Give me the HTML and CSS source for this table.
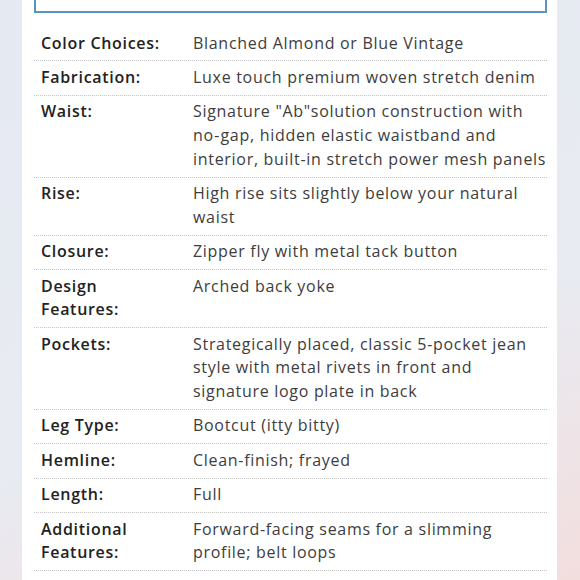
FILE: index.html
```html
<!DOCTYPE html>
<html>
<head>
<meta charset="utf-8">
<link rel="stylesheet" href="styles.css">
</head>
<body>
<div class="page">
  <div class="card">
    <div class="topbox"></div>
    <div class="specs">
      <div class="row"><div class="label">Color Choices:</div><div class="value">Blanched Almond or Blue Vintage</div></div>
      <div class="row"><div class="label">Fabrication:</div><div class="value">Luxe touch premium woven stretch denim</div></div>
      <div class="row"><div class="label">Waist:</div><div class="value">Signature "Ab"solution construction with no&#8209;gap, hidden elastic waistband and interior, built-in stretch power mesh panels</div></div>
      <div class="row"><div class="label">Rise:</div><div class="value">High rise sits slightly below your natural waist</div></div>
      <div class="row"><div class="label">Closure:</div><div class="value">Zipper fly with metal tack button</div></div>
      <div class="row"><div class="label">Design Features:</div><div class="value">Arched back yoke</div></div>
      <div class="row"><div class="label">Pockets:</div><div class="value">Strategically placed, classic 5-pocket jean style with metal rivets in front and signature logo plate in back</div></div>
      <div class="row"><div class="label">Leg Type:</div><div class="value">Bootcut (itty bitty)</div></div>
      <div class="row"><div class="label">Hemline:</div><div class="value">Clean-finish; frayed</div></div>
      <div class="row"><div class="label">Length:</div><div class="value">Full</div></div>
      <div class="row"><div class="label">Additional Features:</div><div class="value">Forward-facing seams for a slimming profile; belt loops</div></div>
    </div>
  </div>
</div>
</body>
</html>
```
FILE: styles.css
```css
html, body {
  margin: 0;
  padding: 0;
}
body {
  width: 580px;
  height: 580px;
  overflow: hidden;
  background: linear-gradient(160deg, #e5e9f1 0%, #e8ebf2 60%, #f3dede 100%);
  font-family: "Open Sans", "Lato", sans-serif;
}
.page {
  padding: 0 23px 0 22px;
  height: 580px;
}
.card {
  background: #ffffff;
  height: 580px;
  padding: 0 10px 0 12px;
  overflow: hidden;
}
.topbox {
  height: 11px;
  border: 2px solid #5a93bd;
  border-top: none;
  margin-bottom: 14px;
}
.row {
  display: flex;
  border-bottom: 1px dotted #c4c4c4;
  padding: 4.5px 0 5.2px 0;
  line-height: 23.7px;
  font-size: 16px;
  letter-spacing: 0.7px;
}
.label {
  width: 159px;
  padding-left: 7px;
  flex: none;
  color: #222222;
  font-weight: 600;
  box-sizing: border-box;
  padding-right: 17px;
}
.value {
  width: 355px;
  flex: none;
  color: #3d3d3d;
}
```
